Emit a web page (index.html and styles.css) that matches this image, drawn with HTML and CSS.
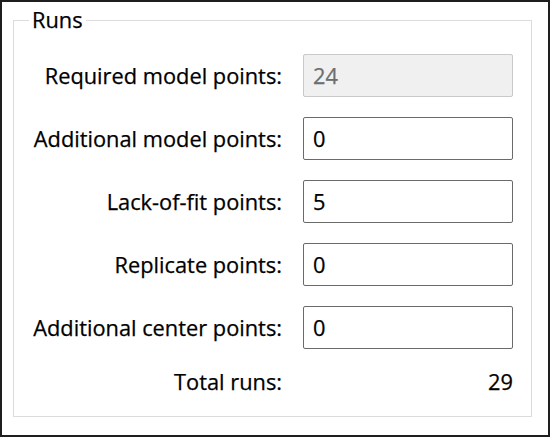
FILE: index.html
```html
<!DOCTYPE html>
<html>
<head>
<meta charset="utf-8">
<link rel="stylesheet" href="styles.css">
</head>
<body>
<div class="frame">
  <fieldset class="group">
    <legend class="group-title">Runs</legend>
    <div class="form">
      <label class="label">Required model points:</label>
      <div class="field disabled">24</div>
      <label class="label">Additional model points:</label>
      <div class="field">0</div>
      <label class="label">Lack-of-fit points:</label>
      <div class="field">5</div>
      <label class="label">Replicate points:</label>
      <div class="field">0</div>
      <label class="label">Additional center points:</label>
      <div class="field">0</div>
      <span class="label total">Total runs:</span>
      <span class="total-value">29</span>
    </div>
  </fieldset>
</div>
</body>
</html>
```

FILE: styles.css
```css
html, body {
  margin: 0;
  padding: 0;
  background: #ffffff;
}
body {
  font-family: "Open Sans", "Noto Sans", sans-serif;
  font-size: 21.8px;
  color: #000;
  -webkit-text-stroke: 0.25px #000;
}
.frame {
  width: 550px;
  height: 437px;
  box-sizing: border-box;
  border: 2px solid #1e1e1e;
  display: flex;
  flex-direction: column;
  padding: 5px 16px 18px 11px;
}
.group {
  flex: 1;
  margin: 0;
  padding: 0;
  border: 1px solid #dcdcdc;
  min-width: 0;
}
.group-title {
  margin-left: 15px;
  padding: 0 3px;
  line-height: 26px;
}
.form {
  display: grid;
  grid-template-columns: 268px 210px;
  column-gap: 21px;
  row-gap: 20px;
  padding-top: 21px;
  align-items: center;
}
.label {
  text-align: right;
  line-height: 26px;
  white-space: nowrap;
}
.field {
  height: 43px;
  box-sizing: border-box;
  border: 1px solid #6a6a6a;
  border-radius: 2px;
  padding-left: 9px;
  display: flex;
  align-items: center;
  background: #fff;
}
.field.disabled {
  background: #f0f0f0;
  border-color: #c9c9c9;
  color: #6d6d6d;
  -webkit-text-stroke: 0.25px #6d6d6d;
}
.total-value {
  text-align: right;
  line-height: 26px;
}
```
